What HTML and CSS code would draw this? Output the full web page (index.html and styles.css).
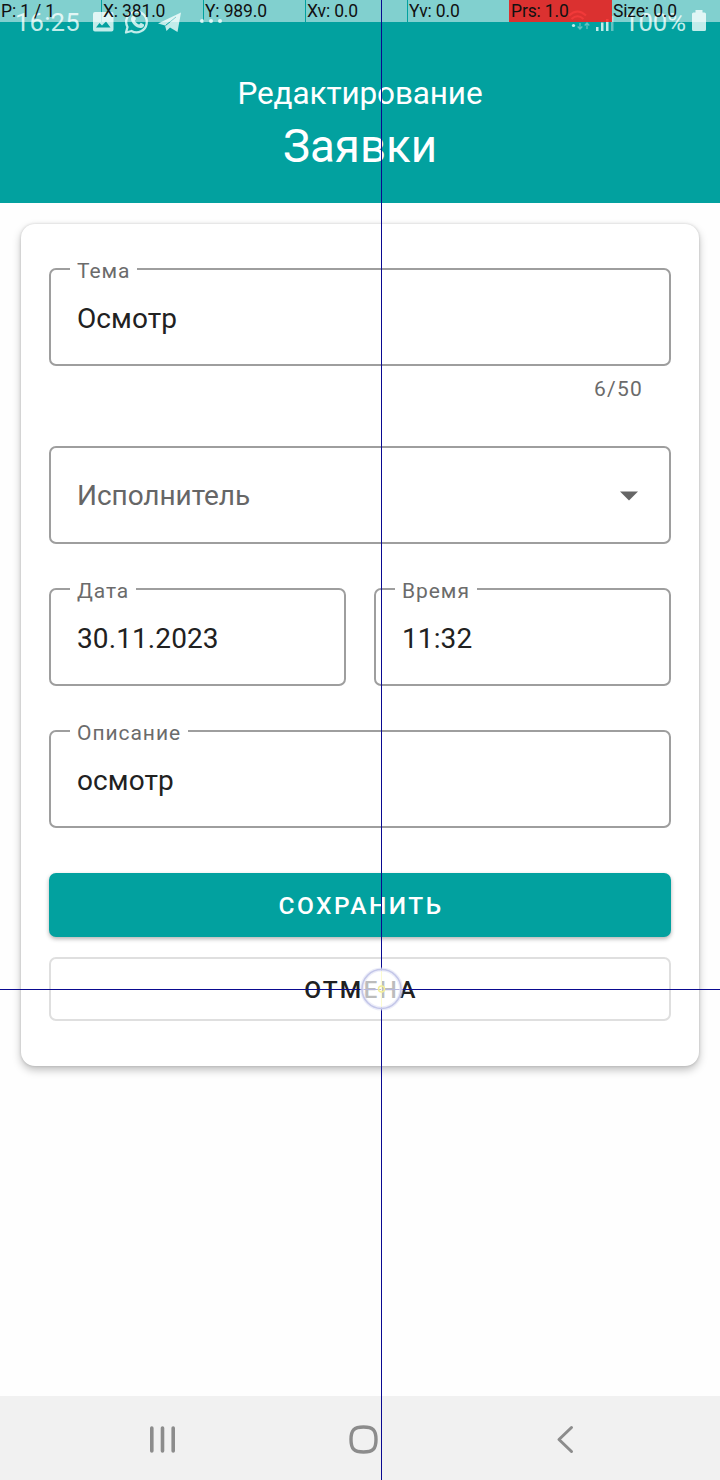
FILE: index.html
```html
<!DOCTYPE html>
<html lang="ru">
<head>
<meta charset="utf-8">
<title>Редактирование заявки</title>
<link rel="stylesheet" href="styles.css">
</head>
<body>
<div class="screen">
  <header class="header">
    <div class="status">
      <span class="clock">16:25</span>
      <svg class="status-icons" width="132" height="26" viewBox="92 9 132 26">
        <path fill="#c2ecea" fill-rule="evenodd" d="M95 12h16.500q2 0 2 2v15.500q0 2-2 2H95q-2 0-2-2V14q0-2 2-2zM96 27.500h14.500l-4.500-6-4 4-2.500-2.500z"/>
        <path fill="none" stroke="#c2ecea" stroke-width="2.300" stroke-linejoin="round" d="M126 32.500l1.500-5.500a10.300 10.300 0 1 1 4 4z"/>
        <path fill="#c2ecea" d="M132.500 16c1-1 2-.5 2.500.5l1 2.500-1.300 1.700c1.300 2 2.600 3 4.500 3.800l1.600-1.700 3.200 1.600c.5 2-1.500 3.500-3.500 3.500-4.500 0-9.500-5-9.500-9 0-1.200.7-2.200 1.500-2.900z"/>
        <path fill="#c2ecea" d="M158 23.500L181 12.500 177.500 32 170 27.500 166.500 31 165 25.500z"/>
        <path stroke="#03a19f" stroke-width="1" d="M165.500 25.500L176 17"/>
        <g fill="#c2ecea"><circle cx="202" cy="21" r="2"/><circle cx="211" cy="21" r="2"/><circle cx="220" cy="21" r="2"/></g>
      </svg>
      <svg class="signal" width="48" height="26" viewBox="568 9 48 26">
        <g fill="none" stroke="#a0dcda" stroke-width="2"><path d="M569 15.500q8.500-8 17 0M571.500 19q6-5.500 12 0"/></g>
        <circle cx="573.500" cy="25.500" r="1.600" fill="#c2ecea"/>
        <path fill="none" stroke="#62c3c1" stroke-width="1.300" d="M580 23v6m-2.300-2.500L580 29l2.300-2.500M587 29v-6m-2.300 2.500L587 23l2.300 2.500"/>
        <path fill="#c2ecea" d="M596 27h2.500v4H596zM601 22.500h2.500V31H601zM606 19h2.500v12H606z"/>
        <path fill="#62c3c1" d="M611 16h2.500v15H611z"/>
      </svg>
      <span class="percent">100%</span>
      <svg class="battery" width="16" height="26" viewBox="691 9 16 26"><path fill="#c2ecea" d="M695.500 10h7v2.500h2q1.500 0 1.500 1.500v15.500q0 1.500-1.500 1.500h-11q-1.500 0-1.500-1.500V14q0-1.500 1.500-1.500h2z"/></svg>
    </div>
    <div class="subtitle">Редактирование</div>
    <h1 class="title">Заявки</h1>
  </header>

  <main class="card">
    <div class="field"><span class="label">Тема</span>Осмотр</div>
    <div class="counter">6/50</div>
    <div class="field select">Исполнитель<svg width="18" height="10" viewBox="0 0 18 10"><path fill="#666" d="M0 .5h18L9 9.500z"/></svg></div>
    <div class="row">
      <div class="field"><span class="label">Дата</span>30.11.2023</div>
      <div class="field"><span class="label">Время</span>11:32</div>
    </div>
    <div class="field"><span class="label">Описание</span>осмотр</div>
    <div class="button save">СОХРАНИТЬ</div>
    <div class="button cancel">ОТМЕНА</div>
  </main>

  <nav class="navbar">
    <svg width="720" height="84" viewBox="0 1396 720 84" fill="none" stroke="#8c8c8c" stroke-linecap="round">
      <path stroke-width="3.600" d="M151.800 1428v23M162.500 1428v23M173.200 1428v23"/>
      <path stroke-width="3.400" d="M363.500 1427c9.500 0 12.500 3 12.500 12.500s-3 12.500-12.500 12.500-12.500-3-12.500-12.500 3-12.500 12.500-12.500z"/>
      <path stroke-width="3" stroke-linejoin="round" d="M571.500 1427.500L559 1439.500l12.500 12"/>
    </svg>
  </nav>
</div>

<div class="pointer">
  <div class="stats">
    <span>P: 1 / 1</span><span>X: 381.0</span><span>Y: 989.0</span><span>Xv: 0.0</span><span>Yv: 0.0</span><span class="pressure">Prs: 1.0</span><span>Size: 0.0</span>
  </div>
  <div class="line-v"></div>
  <div class="line-h"></div>
  <svg class="touch" width="48" height="48" viewBox="0 0 48 48">
    <circle cx="24.500" cy="24" r="19.500" fill="#fff" fill-opacity=".7"/>
    <circle cx="24.500" cy="24" r="19.500" fill="none" stroke="#dfe1f5" stroke-width="4" opacity=".6"/>
    <circle cx="24.500" cy="24" r="19.500" fill="none" stroke="#c3c6e8" stroke-width="1.600"/>
    <path stroke="#fbfad0" d="M24.500 6v36"/>
    <circle cx="24.500" cy="24" r="3" fill="none" stroke="#f3ee98" stroke-width="1.500"/>
  </svg>
</div>
</body>
</html>
```

FILE: styles.css
```css
* { box-sizing: border-box; }
body { margin: 0; background: #fefefe; font-family: Roboto, "Noto Sans", sans-serif; color: #212121; }
.screen { width: 720px; height: 1480px; display: flex; flex-direction: column; overflow: hidden; }
.header { height: 203px; background: #02a19f; color: #fff; text-align: center; flex: none; }
.status { height: 44px; padding: 9px 13px 0 15px; display: flex; align-items: flex-start; color: #c2ecea; font-size: 25.700px; line-height: 27px; }
.clock { width: 77px; text-align: left; white-space: nowrap; letter-spacing: .15px; }
.signal { margin-left: auto; }
.percent { width: 75px; padding-left: 8px; text-align: left; white-space: nowrap; font-size: 25.700px; }
.subtitle { margin-top: 31px; font-size: 31.500px; line-height: 38px; letter-spacing: -.12px; }
.title { margin: 6px 0 0; font-size: 45.700px; font-weight: 400; line-height: 56px; }
.card { margin: 21px 21px 0; height: 842px; padding: 44px 28px 45px; display: flex; flex-direction: column; border-radius: 14px; background: #fff; box-shadow: 0 4px 9px rgba(0,0,0,.25), 0 0 3px rgba(0,0,0,.16); }
.field { position: relative; flex: none; height: 98px; padding: 2px 26px 0; border: 2px solid #9e9e9e; border-radius: 7px; display: flex; align-items: center; font-size: 28px; letter-spacing: .1px; }
.label { position: absolute; left: 19px; top: -11px; padding: 0 7px; background: #fff; color: #6b6b6b; font-size: 21px; line-height: 24px; letter-spacing: .950px; }
.counter { height: 80px; padding: 11px 28px 0; text-align: right; color: #6b6b6b; font-size: 21px; line-height: 24px; letter-spacing: 1.250px; }
.select { color: #666; justify-content: space-between; padding-right: 31px; padding-top: 0; letter-spacing: -.05px; }
.select svg { margin-top: 2px; }
.row { display: grid; grid-template-columns: 1fr 1fr; gap: 28px; margin: 44px 0; }
.button { flex: none; height: 64px; border-radius: 7px; display: flex; align-items: center; justify-content: center; padding: 1px 0 0 2px; font-size: 24.500px; font-weight: 500; letter-spacing: 2.190px; }
.save { margin-top: 45px; background: #02a19f; color: #fff; box-shadow: 0 2px 4px rgba(0,0,0,.3); letter-spacing: 2.450px; }
.cancel { margin-top: 20px; border: 2px solid #dfdfdf; }
.navbar { height: 84px; margin-top: auto; background: #f1f1f1; }
.navbar svg { display: block; }
.pointer { position: absolute; inset: 0; width: 720px; height: 1480px; overflow: hidden; }
.stats { height: 22px; display: grid; grid-template-columns: repeat(6, 101px) 1fr; gap: 1px; color: #111; font-size: 17.500px; letter-spacing: -.15px; line-height: 22px; white-space: nowrap; }
.stats span { padding-left: 1px; background: rgba(255,255,255,.5); }
.stats .pressure { background: rgba(255,30,30,.86); margin-left: -1px; margin-right: -1px; padding-left: 2px; }
.line-v { position: absolute; left: 381px; top: 0; width: 1px; height: 1480px; background: #0a0a90; }
.line-h { position: absolute; left: 0; top: 989px; width: 720px; height: 1px; background: #0a0a90; }
.touch { position: absolute; left: 357px; top: 965px; }
```
